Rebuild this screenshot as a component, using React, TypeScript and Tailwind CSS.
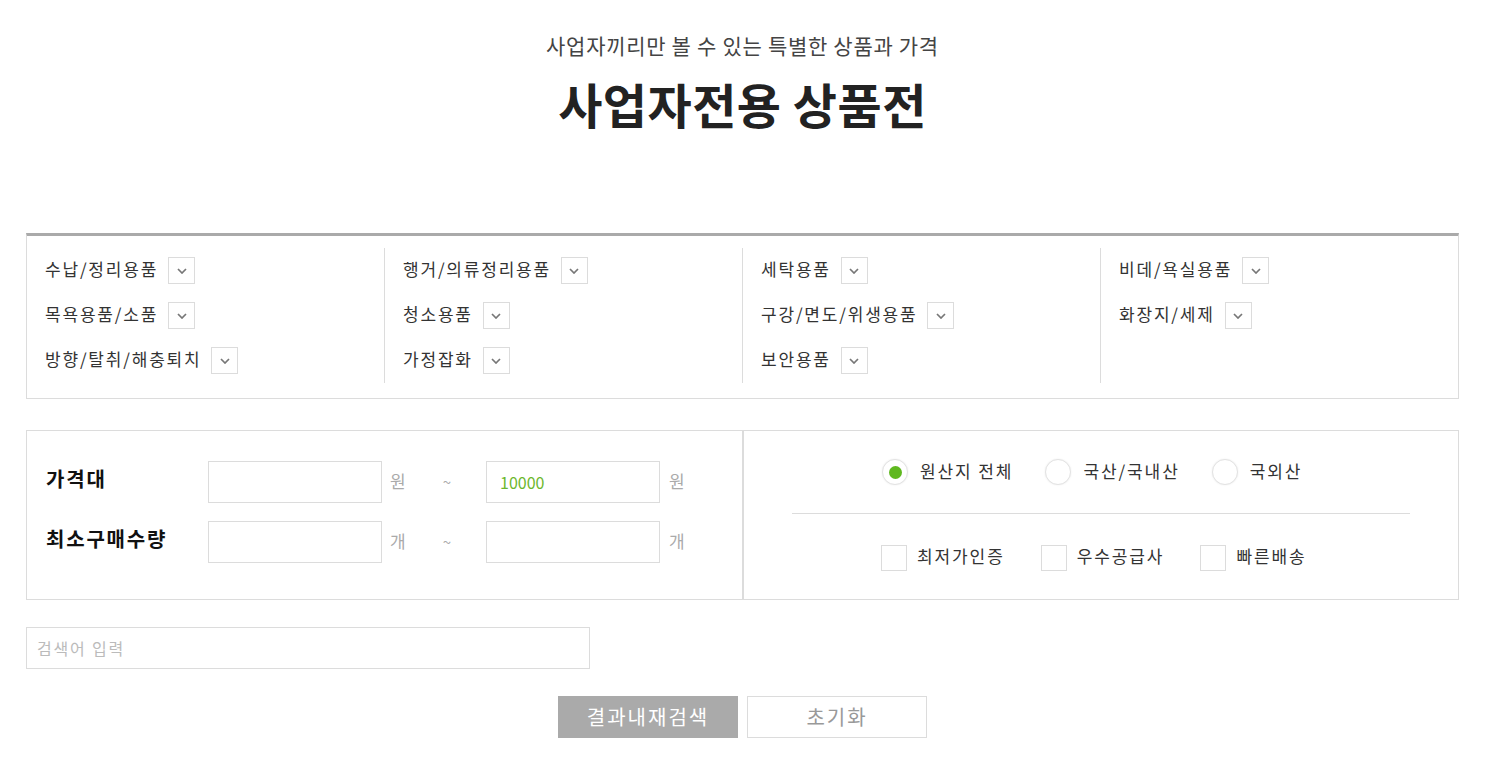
import React from "react";

const font = { fontFamily: '"Noto Sans CJK KR", "Noto Sans", sans-serif' };

const columns: string[][] = [
  ["수납/정리용품", "목욕용품/소품", "방향/탈취/해충퇴치"],
  ["행거/의류정리용품", "청소용품", "가정잡화"],
  ["세탁용품", "구강/면도/위생용품", "보안용품"],
  ["비데/욕실용품", "화장지/세제"],
];

function Chevron() {
  return (
    <span className="ml-[10px] flex h-[27px] w-[27px] items-center justify-center border border-[#dcdcdc] bg-white">
      <svg width="10" height="6" viewBox="0 0 10 6" fill="none">
        <path d="M1 1l4 4 4-4" stroke="#777" strokeWidth="1.7" />
      </svg>
    </span>
  );
}

function Radio({ label, checked }: { label: string; checked?: boolean }) {
  return (
    <label className="flex items-center">
      <span className="flex h-[26px] w-[26px] items-center justify-center rounded-full border border-[#e2e2e2] bg-white shadow-[0_0_2px_rgba(0,0,0,0.08)]">
        {checked && <span className="h-[13px] w-[13px] rounded-full bg-[#5fb81f]" />}
      </span>
      <span className="ml-[12px] pb-[2px] text-[17px] tracking-[1.9px] text-[#333]">{label}</span>
    </label>
  );
}

function Check({ label }: { label: string }) {
  return (
    <label className="flex items-center">
      <span className="h-[26px] w-[26px] border border-[#dcdcdc] bg-white" />
      <span className="ml-[10px] pb-[4px] text-[17px] tracking-[1.9px] text-[#333]">{label}</span>
    </label>
  );
}

function RangeRow({ label, unit, to }: { label: string; unit: string; to?: string }) {
  return (
    <div className="flex h-[42px] items-center">
      <span className="w-[162px] pb-[6px] text-[20px] font-bold tracking-[1.8px] text-[#111]">{label}</span>
      <div className="h-[42px] w-[174px] border border-[#dcdcdc] bg-white" />
      <span className="ml-[8px] w-[18px] pb-[3px] text-[17px] text-[#aaa]">{unit}</span>
      <span className="w-[78px] text-center text-[15px] text-[#aaa]">~</span>
      <div className="flex h-[42px] w-[174px] items-center border border-[#dcdcdc] bg-white pl-[13px] text-[16px] text-[#6cb72d]">
        {to}
      </div>
      <span className="ml-[9px] pb-[3px] text-[17px] text-[#aaa]">{unit}</span>
    </div>
  );
}

export default function App() {
  return (
    <div className="min-h-[769px] bg-white" style={font}>
      <div className="ml-[26px] w-[1433px]">
        {/* Header */}
        <div className="flex flex-col items-center pt-[30px]">
          <p className="text-[21px] leading-[30px] tracking-[0.7px] text-[#444]">
            사업자끼리만 볼 수 있는 특별한 상품과 가격
          </p>
          <h1 className="mt-[11px] text-[48px] font-bold leading-[64px] tracking-[0.5px] text-[#222]">
            사업자전용 상품전
          </h1>
        </div>

        {/* Categories */}
        <div className="mt-[98px] flex border-x border-b border-t-[3px] border-[#dcdcdc] border-t-[#aaa] pb-[15px] pt-[12px]">
          {columns.map((col, i) => (
            <div
              key={i}
              className={`flex-1 pl-[18px] ${i > 0 ? "border-l border-[#dcdcdc]" : ""}`}
            >
              <div className="flex h-[135px] flex-col">
                {col.map((item) => (
                  <div key={item} className="flex h-[45px] items-center">
                    <span className="pb-[3px] text-[17px] tracking-[1.8px] text-[#333]">{item}</span>
                    <Chevron />
                  </div>
                ))}
              </div>
            </div>
          ))}
        </div>

        {/* Filters */}
        <div className="mt-[31px] flex">
          <div className="h-[170px] w-[717px] shrink-0 border border-[#dcdcdc] pl-[19px] pt-[30px]">
            <div className="flex flex-col gap-[18px]">
              <RangeRow label="가격대" unit="원" to="10000" />
              <RangeRow label="최소구매수량" unit="개" />
            </div>
          </div>
          <div className="h-[170px] w-[716px] shrink-0 border border-[#dcdcdc] px-[48px] pt-[28px]">
            <div className="flex h-[26px] items-center gap-[32px] pl-[90px]">
              <Radio label="원산지 전체" checked />
              <Radio label="국산/국내산" />
              <Radio label="국외산" />
            </div>
            <div className="mt-[28px] h-px bg-[#dcdcdc]" />
            <div className="mt-[31px] flex h-[26px] items-center gap-[36px] pl-[89px]">
              <Check label="최저가인증" />
              <Check label="우수공급사" />
              <Check label="빠른배송" />
            </div>
          </div>
        </div>

        {/* Search */}
        <div className="mt-[27px] flex h-[42px] w-[564px] items-center border border-[#dcdcdc] pl-[10px] text-[16px] tracking-[1.8px] text-[#bbb]">
          검색어 입력
        </div>

        {/* Buttons */}
        <div className="mt-[27px] flex justify-center gap-[9px]">
          <button className="h-[42px] w-[180px] bg-[#aaa] text-[20px] tracking-[2px] text-white">결과내재검색</button>
          <button className="h-[42px] w-[180px] border border-[#dcdcdc] bg-white text-[20px] tracking-[2px] text-[#999]">
            초기화
          </button>
        </div>
      </div>
    </div>
  );
}
